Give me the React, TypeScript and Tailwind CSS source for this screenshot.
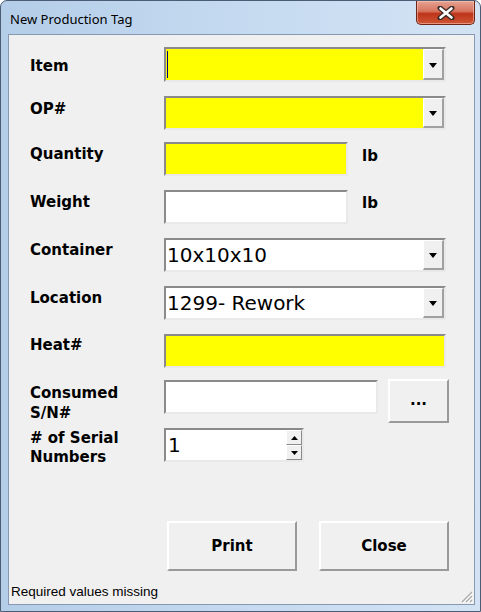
import React from 'react';

const sunken =
  'border-2 border-t-[#8a8a8a] border-l-[#8a8a8a] border-b-[#e9e9e9] border-r-[#e9e9e9]';
const raised =
  'border-2 border-t-white border-l-white border-b-[#9a9a9a] border-r-[#9a9a9a] bg-[#f0f0f0]';

const Arrow = ({ up = false, small = false }: { up?: boolean; small?: boolean }) => {
  const w = small ? 7 : 8;
  const h = small ? 4 : 5;
  return (
    <svg width={w} height={h} viewBox={`0 0 ${w} ${h}`}>
      <polygon
        points={up ? `${w / 2},0 ${w},${h} 0,${h}` : `0,0 ${w},0 ${w / 2},${h}`}
        fill="#000"
      />
    </svg>
  );
};

const DropButton = () => (
  <div className="w-[21px] h-full flex items-center justify-center border-t border-l border-white border-r-2 border-b-2 border-r-[#a0a0a0] border-b-[#a0a0a0] bg-[#f0f0f0]">
    <div className="mt-[2px]">
      <Arrow />
    </div>
  </div>
);

const Combo = ({
  width,
  yellow = false,
  value,
  caret = false,
}: {
  width: string;
  yellow?: boolean;
  value?: string;
  caret?: boolean;
}) => (
  <div className={`${width} h-full flex ${sunken} ${yellow ? 'bg-[#ffff00]' : 'bg-white'}`}>
    <div className="flex-1 flex items-center pl-[1px] text-[20px] leading-[24px] text-black">
      {caret && <div className="w-[1px] h-[27px] bg-[#000080]" />}
      {value}
    </div>
    <DropButton />
  </div>
);

const Label = ({ children, pad }: { children: React.ReactNode; pad: string }) => (
  <div className={`w-[134px] shrink-0 text-[15px] font-bold leading-[19px] text-black ${pad}`}>
    {children}
  </div>
);

export default function App() {
  return (
    <div className="w-[481px] h-[612px] flex flex-col border border-[#4a5d74] rounded-t-[7px] bg-[linear-gradient(90deg,#b4cde8_0%,#c5daf0_50%,#d3e3f4_100%)] font-['DejaVu_Sans',sans-serif]">
      {/* title bar */}
      <div className="h-[33px] flex items-start shrink-0">
        <div className="pl-[9px] pt-[9px] text-[13px] leading-[18px] text-black font-['Noto_Sans',sans-serif]">
          New Production Tag
        </div>
        <div className="ml-auto mr-[5px] w-[59px] h-[24px] rounded-b-[5px] border border-t-0 border-[#6e2417] bg-[linear-gradient(180deg,#e6a292_0%,#d6745e_45%,#bd3519_55%,#cf5636_100%)] flex items-center justify-center shadow-[inset_0_0_0_1px_rgba(255,210,200,0.5)]">
          <svg width="18" height="14" viewBox="0 0 18 14">
            <path d="M3 2 L15 12 M15 2 L3 12" stroke="#3a2a28" strokeWidth="5" strokeLinecap="round" />
            <path d="M3.5 2.5 L14.5 11.5 M14.5 2.5 L3.5 11.5" stroke="#fff" strokeWidth="2.6" strokeLinecap="round" />
          </svg>
        </div>
      </div>

      {/* client area */}
      <div className="relative flex-1 ml-[7px] mr-[5px] mb-[6px] border border-[#8699b0] bg-[#f0f0f0] flex flex-col">
        <div className="flex flex-col pl-[21px]">
          <div className="flex h-[35px] mt-[12px]">
            <Label pad="pt-[10px]">Item</Label>
            <Combo width="w-[282px]" yellow caret />
          </div>

          <div className="flex h-[34px] mt-[14px]">
            <Label pad="pt-[4px]">OP#</Label>
            <Combo width="w-[282px]" yellow />
          </div>

          <div className="flex h-[34px] mt-[12px]">
            <Label pad="pt-[3px]">Quantity</Label>
            <div className={`w-[184px] h-full ${sunken} bg-[#ffff00]`} />
            <div className="ml-[14px] pt-[5px] text-[15px] font-bold leading-[19px]">lb</div>
          </div>

          <div className="flex h-[34px] mt-[14px]">
            <Label pad="pt-[3px]">Weight</Label>
            <div className={`w-[184px] h-full ${sunken} bg-white`} />
            <div className="ml-[14px] pt-[4px] text-[15px] font-bold leading-[19px]">lb</div>
          </div>

          <div className="flex h-[34px] mt-[14px]">
            <Label pad="pt-[3px]">Container</Label>
            <Combo width="w-[282px]" value="10x10x10" />
          </div>

          <div className="flex h-[34px] mt-[14px]">
            <Label pad="pt-[3px]">Location</Label>
            <Combo width="w-[282px]" value="1299- Rework" />
          </div>

          <div className="flex h-[34px] mt-[14px]">
            <Label pad="pt-[2px]">Heat#</Label>
            <div className={`w-[282px] h-full ${sunken} bg-[#ffff00]`} />
          </div>

          <div className="flex h-[44px] mt-[11px]">
            <Label pad="pt-[4px] leading-[20px]">
              Consumed
              <br />
              S/N#
            </Label>
            <div className={`w-[214px] h-[34px] mt-[1px] ${sunken} bg-white`} />
            <button
              className={`ml-[10px] w-[61px] h-[44px] ${raised} text-[15px] font-bold text-black flex items-center justify-center pb-[2px]`}
            >
              ...
            </button>
          </div>

          <div className="flex h-[34px] mt-[5px]">
            <Label pad="pt-[1px]">
              # of Serial
              <br />
              Numbers
            </Label>
            <div className={`w-[140px] h-full flex ${sunken} bg-white`}>
              <div className="flex-1 flex items-center pl-[2px] text-[20px] leading-[24px]">1</div>
              <div className="w-[16px] h-full flex flex-col">
                <div className="flex-1 flex items-center justify-center border-t border-l border-white border-r border-b border-r-[#8a8a8a] border-b-[#8a8a8a] bg-[#f0f0f0]">
                  <Arrow up small />
                </div>
                <div className="flex-1 flex items-center justify-center border-t border-l border-white border-r border-b border-r-[#8a8a8a] border-b-[#8a8a8a] bg-[#f0f0f0]">
                  <Arrow small />
                </div>
              </div>
            </div>
          </div>

          <div className="flex mt-[59px] pl-[137px] gap-[22px]">
            <button
              className={`w-[130px] h-[50px] ${raised} text-[15px] font-bold text-black flex items-center justify-center`}
            >
              Print
            </button>
            <button
              className={`w-[130px] h-[50px] ${raised} text-[15px] font-bold text-black flex items-center justify-center`}
            >
              Close
            </button>
          </div>
        </div>

        <div className="mt-[13px] pl-[2px] text-[13.5px] leading-[16px] text-black font-['Liberation_Sans',sans-serif]">
          Required values missing
        </div>

        {/* resize grip */}
        <svg className="absolute right-[1px] bottom-[1px]" width="13" height="13" viewBox="0 0 13 13">
          <path d="M12 2 L2 12 M12 6 L6 12 M12 10 L10 12" stroke="#a9a9a9" strokeWidth="1.2" />
          <path d="M13 3 L3 13 M13 7 L7 13 M13 11 L11 13" stroke="#ffffff" strokeWidth="1" />
        </svg>
      </div>
    </div>
  );
}
